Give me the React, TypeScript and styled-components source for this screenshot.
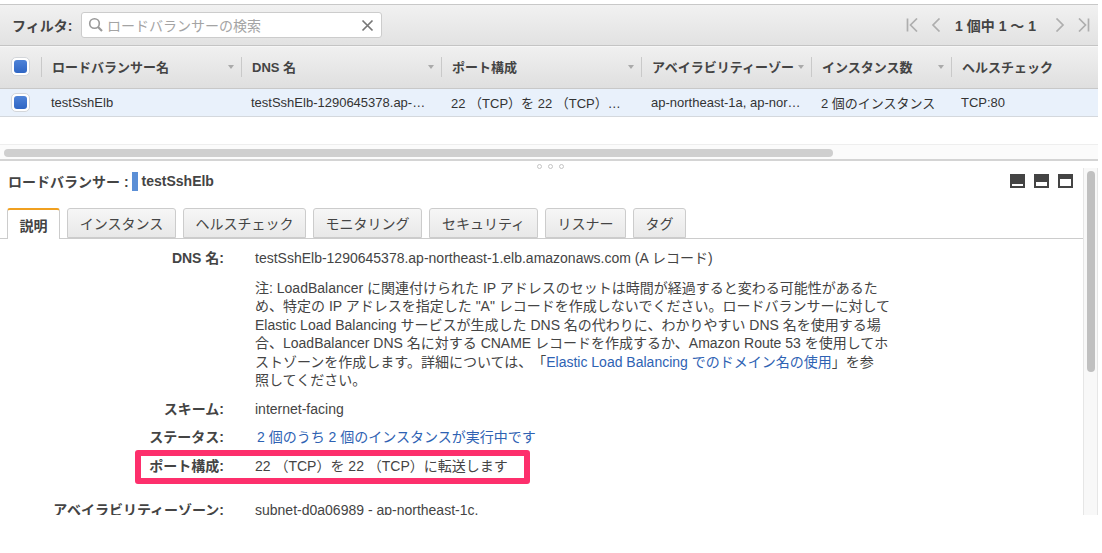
import React from "react";
import styled, { createGlobalStyle } from "styled-components";

const FONT = `"Liberation Sans", "Noto Sans CJK JP", sans-serif`;

const Global = createGlobalStyle`
  html, body { margin: 0; padding: 0; background: #fff; }
  body { font-family: ${FONT}; color: #333; width: 1102px; height: 553px; overflow: hidden; }
  * { box-sizing: border-box; }
`;

const Page = styled.div`
  width: 1102px;
  height: 553px;
  padding: 4px 4px 0 0;
  overflow: hidden;
  display: flex;
  flex-direction: column;
`;

const Toolbar = styled.div`
  height: 42px;
  flex: none;
  border-top: 1px solid #c8c8c8;
  border-bottom: 1px solid #c4c4c4;
  background: linear-gradient(#f1f1f1, #e2e2e2);
  display: flex;
  align-items: center;
  padding: 0 8px 0 12px;
`;
const FilterLabel = styled.span`
  font-size: 14px;
  font-weight: 700;
  color: #444;
  width: 69px;
  white-space: nowrap;
`;
const Search = styled.div`
  width: 301px;
  height: 26px;
  background: #fff;
  border: 1px solid #ccc;
  border-radius: 3px;
  display: flex;
  align-items: center;
  padding: 0 7px 0 6px;
  gap: 3px;
`;
const Placeholder = styled.span`
  flex: 1;
  font-size: 14px;
  color: #a4a4a4;
`;
const Pager = styled.div`
  margin-left: auto;
  display: flex;
  align-items: center;
  gap: 13px;
  color: #444;
  font-size: 14px;
  font-weight: 700;
`;
const PagerText = styled.span`
  margin: 0 6px 0 1px;
`;

const HeaderRow = styled.div`
  height: 43px;
  flex: none;
  border-top: 1px solid #f7f7f7;
  border-bottom: 1px solid #c8c8c8;
  background: linear-gradient(#f0f0f0, #dfdfdf);
  display: flex;
  align-items: center;
  padding-bottom: 2px;
`;
const DataRow = styled.div`
  height: 28px;
  flex: none;
  background: #e9f1fb;
  border-bottom: 1px solid #d4d8dd;
  display: flex;
  align-items: center;
`;
const CheckCell = styled.div`
  width: 41px;
  flex: none;
  display: flex;
  justify-content: center;
`;
const Check = styled.span`
  width: 19px;
  height: 19px;
  border-radius: 5px;
  background: #fff;
  border: 1px solid #d3d6da;
  padding: 2px;
  display: block;
  &::after {
    content: "";
    display: block;
    width: 13px;
    height: 13px;
    border-radius: 3px;
    background: linear-gradient(#4f83d8, #2f66c4);
  }
`;
const HeadCell = styled.div<{ $w: number; $last?: boolean }>`
  width: ${(p) => p.$w}px;
  flex: ${(p) => (p.$last ? "1" : "none")};
  height: 20px;
  border-left: 1px solid #c9c9c9;
  padding: 0 7px 0 10px;
  display: flex;
  align-items: center;
  justify-content: space-between;
  font-size: 13px;
  font-weight: 700;
  color: #444;
  white-space: nowrap;
`;
const Caret = styled.span`
  flex: none;
  width: 0;
  height: 0;
  border-left: 3.5px solid transparent;
  border-right: 3.5px solid transparent;
  border-top: 4px solid #aaa;
`;
const DataCell = styled.div<{ $w: number }>`
  width: ${(p) => p.$w}px;
  flex: none;
  padding-left: 10px;
  font-size: 13px;
  color: #333;
  white-space: nowrap;
`;

const Blank = styled.div`
  height: 28px;
  flex: none;
  border-bottom: 1px solid #eee;
`;
const HScroll = styled.div`
  height: 16px;
  flex: none;
  background: #fbfbfb;
  border-bottom: 2px solid #d4d4d4;
  padding: 4px 0 0 4px;
`;
const HThumb = styled.div`
  width: 829px;
  height: 8px;
  background: #cfcfcf;
  border-radius: 4px;
`;

const Detail = styled.div`
  flex: 1;
  min-height: 0;
  position: relative;
  display: flex;
  flex-direction: column;
`;
const Grip = styled.div`
  position: absolute;
  top: 3px;
  left: 537px;
  display: flex;
  gap: 6px;
`;
const GripDot = styled.span`
  width: 5px;
  height: 5px;
  border: 1px solid #c4c4c4;
  border-radius: 50%;
`;
const TitleBar = styled.div`
  height: 47px;
  flex: none;
  display: flex;
  align-items: center;
  padding: 0 0 7px 8px;
`;
const TitleLabel = styled.span`
  font-size: 14px;
  font-weight: 700;
  color: #444;
`;
const Swatch = styled.span`
  width: 6px;
  height: 19px;
  background: #5b8fd6;
  margin: 0 4px 0 3px;
`;
const TitleName = styled.span`
  font-size: 14px;
  font-weight: 700;
  color: #444;
`;
const PaneIcons = styled.div`
  margin-left: auto;
  margin-right: 25px;
  display: flex;
  gap: 9px;
`;
const PaneIcon = styled.span<{ $top: number; $h: number }>`
  width: 15px;
  height: 14px;
  background: #444;
  position: relative;
  &::after {
    content: "";
    position: absolute;
    left: 2px;
    right: 2px;
    top: ${(p) => p.$top}px;
    height: ${(p) => p.$h}px;
    background: #fff;
  }
`;
const Body = styled.div`
  flex: 1;
  min-height: 0;
  display: flex;
`;
const Main = styled.div`
  flex: 1;
  min-width: 0;
  overflow: hidden;
  height: 307px;
`;
const Tabs = styled.div`
  height: 31px;
  border-bottom: 1px solid #ccc;
  display: flex;
  align-items: flex-end;
  padding-left: 7px;
  gap: 7px;
`;
const Tab = styled.div<{ $active?: boolean; $w: number }>`
  width: ${(p) => p.$w}px;
  flex: none;
  height: ${(p) => (p.$active ? "31px" : "30px")};
  margin-bottom: ${(p) => (p.$active ? "-1px" : "0")};
  border: 1px solid #ccc;
  border-top: ${(p) => (p.$active ? "2px solid #f0a020" : "1px solid #ccc")};
  border-bottom: ${(p) => (p.$active ? "none" : "1px solid #ccc")};
  border-radius: 3px 3px 0 0;
  background: ${(p) => (p.$active ? "#fff" : "linear-gradient(#f6f6f6, #e8e8e8)")};
  font-size: 14px;
  font-weight: ${(p) => (p.$active ? 700 : 400)};
  color: #444;
  white-space: nowrap;
  display: flex;
  align-items: center;
  justify-content: center;
`;
const Rows = styled.div`
  padding-top: 10px;
`;
const Row = styled.div<{ $mb: number }>`
  display: flex;
  margin-bottom: ${(p) => p.$mb}px;
  font-size: 14px;
  line-height: 18.4px;
`;
const Label = styled.div`
  width: 224px;
  flex: none;
  text-align: right;
  font-weight: 700;
  color: #444;
`;
const Value = styled.div`
  margin-left: 31px;
  color: #444;
  white-space: nowrap;
  text-spacing-trim: space-all;
`;
const Link = styled.span`
  color: #2e62b3;
`;
const LinkValue = styled.span`
  color: #2e62b3;
  margin-left: 2px;
`;
const Highlight = styled.div`
  position: absolute;
  left: 135px;
  top: 289px;
  width: 395px;
  height: 34px;
  border: 6px solid #fd2f6c;
  border-radius: 3px;
`;
const VScroll = styled.div`
  width: 15px;
  flex: none;
  height: 347px;
  margin-top: -40px;
  background: #f8f8f8;
  border-left: 1px solid #e6e6e6;
  border-right: 1px solid #e6e6e6;
  padding: 3px 2px 0 3px;
`;
const VThumb = styled.div`
  height: 201px;
  background: #c0c0c0;
  border-radius: 4px;
`;

const Chevron = ({ d, w }: { d: string; w: number }) => (
  <svg width={w} height="14" viewBox={`0 0 ${w} 14`} fill="none" stroke="#aeaeae" strokeWidth="1.7">
    <path d={d} />
  </svg>
);

export default function App() {
  return (
    <Page>
      <Global />
      <Toolbar>
        <FilterLabel>フィルタ:</FilterLabel>
        <Search>
          <svg width="16" height="16" viewBox="0 0 16 16" fill="none" stroke="#999" strokeWidth="1.6">
            <circle cx="6.5" cy="6.5" r="4.8" />
            <path d="M10 10l4 4" strokeWidth="2.2" />
          </svg>
          <Placeholder>ロードバランサーの検索</Placeholder>
          <svg width="13" height="13" viewBox="0 0 13 13" fill="none" stroke="#777" strokeWidth="1.7">
            <path d="M1.5 1.5l10 10M11.5 1.5l-10 10" />
          </svg>
        </Search>
        <Pager>
          <Chevron w={12} d="M1.500 .5v13M11 .5L4.500 7l6.500 6.500" />
          <Chevron w={10} d="M8.500 .5L2 7l6.500 6.500" />
          <PagerText>1 個中 1 〜 1</PagerText>
          <Chevron w={10} d="M1.500 .5L8 7l-6.500 6.500" />
          <Chevron w={12} d="M10.500 .5v13M1 .5L7.500 7 1 13.500" />
        </Pager>
      </Toolbar>
      <HeaderRow>
        <CheckCell><Check /></CheckCell>
        <HeadCell $w={200}>ロードバランサー名<Caret /></HeadCell>
        <HeadCell $w={200}>DNS 名<Caret /></HeadCell>
        <HeadCell $w={200}>ポート構成<Caret /></HeadCell>
        <HeadCell $w={170}>アベイラビリティーゾー<Caret /></HeadCell>
        <HeadCell $w={140}>インスタンス数<Caret /></HeadCell>
        <HeadCell $w={147} $last>ヘルスチェック</HeadCell>
      </HeaderRow>
      <DataRow>
        <CheckCell><Check /></CheckCell>
        <DataCell $w={200}>testSshElb</DataCell>
        <DataCell $w={200}>testSshElb-1290645378.ap-…</DataCell>
        <DataCell $w={200}>22 （TCP）を 22 （TCP）…</DataCell>
        <DataCell $w={170}>ap-northeast-1a, ap-nor…</DataCell>
        <DataCell $w={140}>2 個のインスタンス</DataCell>
        <DataCell $w={147}>TCP:80</DataCell>
      </DataRow>
      <Blank />
      <HScroll><HThumb /></HScroll>
      <Detail>
        <Grip><GripDot /><GripDot /><GripDot /></Grip>
        <TitleBar>
          <TitleLabel>ロードバランサー :</TitleLabel>
          <Swatch />
          <TitleName>testSshElb</TitleName>
          <PaneIcons>
            <PaneIcon $top={10} $h={2} />
            <PaneIcon $top={8} $h={4} />
            <PaneIcon $top={5} $h={7} />
          </PaneIcons>
        </TitleBar>
        <Body>
          <Main>
            <Tabs>
              <Tab $active $w={53}>説明</Tab>
              <Tab $w={109}>インスタンス</Tab>
              <Tab $w={123}>ヘルスチェック</Tab>
              <Tab $w={109}>モニタリング</Tab>
              <Tab $w={109}>セキュリティ</Tab>
              <Tab $w={81}>リスナー</Tab>
              <Tab $w={53}>タグ</Tab>
            </Tabs>
            <Rows>
              <Row $mb={11.6}>
                <Label>DNS 名:</Label>
                <Value>testSshElb-1290645378.ap-northeast-1.elb.amazonaws.com (A レコード)</Value>
              </Row>
              <Row $mb={10.6}>
                <Label />
                <Value>
                  注: LoadBalancer に関連付けられた IP アドレスのセットは時間が経過すると変わる可能性があるた<br />
                  め、特定の IP アドレスを指定した "A" レコードを作成しないでください。ロードバランサーに対して<br />
                  Elastic Load Balancing サービスが生成した DNS 名の代わりに、わかりやすい DNS 名を使用する場<br />
                  合、LoadBalancer DNS 名に対する CNAME レコードを作成するか、Amazon Route 53 を使用してホ<br />
                  ストゾーンを作成します。詳細については、「<Link>Elastic Load Balancing でのドメイン名の使用</Link>」を参<br />
                  照してください。
                </Value>
              </Row>
              <Row $mb={9.6}>
                <Label>スキーム:</Label>
                <Value>internet-facing</Value>
              </Row>
              <Row $mb={10.6}>
                <Label>ステータス:</Label>
                <Value><LinkValue>2 個のうち 2 個のインスタンスが実行中です</LinkValue></Value>
              </Row>
              <Row $mb={25.6}>
                <Label>ポート構成:</Label>
                <Value>22 （TCP）を 22 （TCP）に転送します</Value>
              </Row>
              <Row $mb={0}>
                <Label>アベイラビリティーゾーン:</Label>
                <Value>subnet-d0a06989 - ap-northeast-1c.</Value>
              </Row>
            </Rows>
          </Main>
          <VScroll><VThumb /></VScroll>
        </Body>
        <Highlight />
      </Detail>
    </Page>
  );
}
